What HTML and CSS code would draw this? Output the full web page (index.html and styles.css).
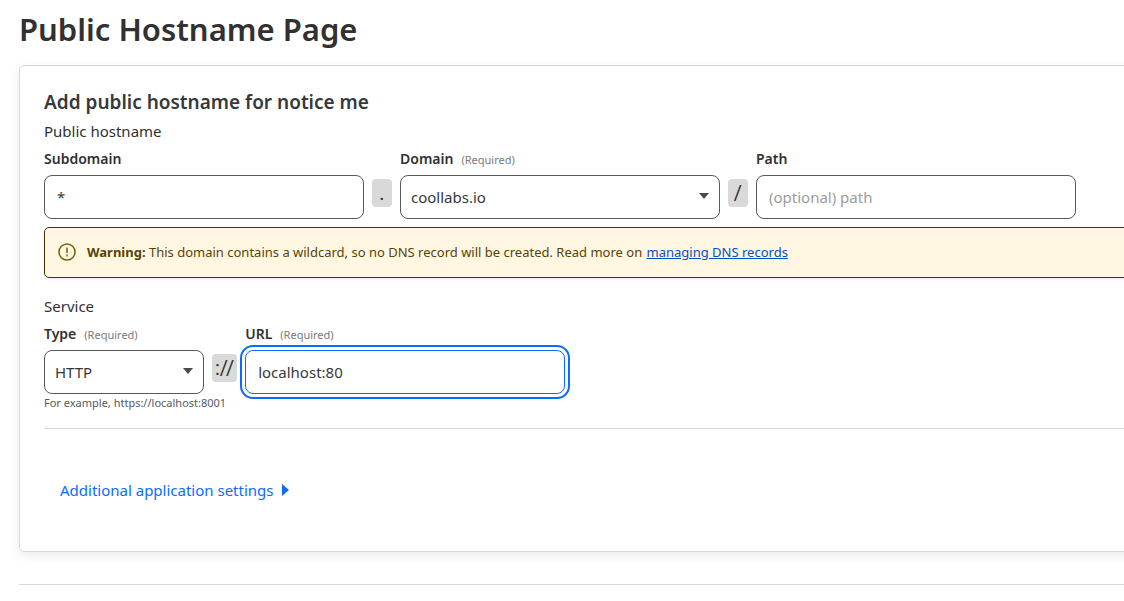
FILE: index.html
```html
<!DOCTYPE html>
<html lang="en">
<head>
<meta charset="utf-8">
<meta name="viewport" content="width=device-width, initial-scale=1">
<title>Public Hostname Page</title>
<link rel="stylesheet" href="styles.css">
</head>
<body>
<main class="page">
  <h1 class="page-title">Public Hostname Page</h1>
  <form class="card">
    <h2 class="card-title">Add public hostname for notice me</h2>
    <p class="group-name">Public hostname</p>
    <div class="row">
      <div class="field">
        <div class="field-head"><label for="subdomain">Subdomain</label></div>
        <input class="control" id="subdomain" type="text" value="*">
      </div>
      <span class="separator">.</span>
      <div class="field">
        <div class="field-head"><label for="domain">Domain</label><span class="required">(Required)</span></div>
        <div class="select">
          <select class="control" id="domain"><option>coollabs.io</option></select>
          <svg class="select-arrow" width="10" height="6" viewBox="0 0 10 6" aria-hidden="true"><path d="M0 0h10L5 6z"/></svg>
        </div>
      </div>
      <span class="separator">/</span>
      <div class="field">
        <div class="field-head"><label for="path">Path</label></div>
        <input class="control" id="path" type="text" placeholder="(optional) path">
      </div>
    </div>
    <div class="alert" role="alert">
      <svg class="alert-icon" width="18" height="18" viewBox="0 0 18 18" aria-hidden="true"><circle cx="9" cy="9" r="8"/><path d="M9 4.5v5.5M9 11.6v1.8"/></svg>
      <p class="alert-text"><strong>Warning:</strong> This domain contains a wildcard, so no DNS record will be created. Read more on <a class="alert-link" href="#">managing DNS records</a></p>
    </div>
    <p class="group-name">Service</p>
    <div class="row">
      <div class="field field-small">
        <div class="field-head"><label for="type">Type</label><span class="required">(Required)</span></div>
        <div class="select">
          <select class="control" id="type"><option>HTTP</option></select>
          <svg class="select-arrow" width="10" height="6" viewBox="0 0 10 6" aria-hidden="true"><path d="M0 0h10L5 6z"/></svg>
        </div>
      </div>
      <span class="separator">://</span>
      <div class="field">
        <div class="field-head"><label for="url">URL</label><span class="required">(Required)</span></div>
        <input class="control control-active" id="url" type="text" value="localhost:80">
      </div>
    </div>
    <p class="hint">For example, https://localhost:8001</p>
    <hr class="rule">
    <button class="disclosure" type="button">Additional application settings
      <svg width="7" height="12" viewBox="0 0 7 12" aria-hidden="true"><path d="M0 0l7 6-7 6z"/></svg>
    </button>
  </form>
  <hr class="rule">
</main>
</body>
</html>
```
FILE: styles.css
```css
* { box-sizing: border-box; }

body {
  margin: 0;
  overflow-x: hidden;
  background: #fff;
  color: #313131;
  font: 15px/24px "Noto Sans", "Open Sans", sans-serif;
}

h1, h2, p { margin: 0; }

.page {
  margin-right: -48px;
  padding: 9px 0 16px 19px;
}

.page-title {
  font-size: 31px;
  font-weight: 600;
  line-height: 40px;
}

.card {
  margin: 16px 0 32px;
  padding: 24px 24px 49px;
  border: 1px solid #d9d9d9;
  border-radius: 5px;
  box-shadow: 0 4px 12px rgba(0, 0, 0, 0.08);
}

.card-title {
  color: #36393a;
  font-size: 19px;
  font-weight: 600;
  line-height: 25px;
}

.group-name { margin: 4px 0; }

.row {
  display: flex;
  gap: 8px;
}

.field {
  display: flex;
  flex: 0 1 320px;
  flex-direction: column;
  gap: 4px;
}

.field-small { flex-basis: 160px; }

.field-head {
  display: flex;
  align-items: baseline;
  gap: 8px;
  font-size: 14px;
  font-weight: 600;
}

.required {
  color: #797979;
  font-size: 11px;
  font-weight: 400;
  line-height: 16px;
}

.control {
  display: block;
  width: 100%;
  height: 44px;
  padding: 0 12px;
  border: 1px solid #595959;
  border-radius: 8px;
  background: #fff;
  color: #36393a;
  font: inherit;
}

.control::placeholder { color: #9d9d9d; opacity: 1; }

.control:focus,
.control-active {
  border-color: #0a6cff;
  outline: 2px solid #0a6cff;
  outline-offset: 3px;
}

.select { position: relative; }

.select .control {
  padding: 0 32px 0 10px;
  appearance: none;
}

.select-arrow {
  position: absolute;
  top: 18px;
  right: 11px;
  fill: #4a4a4a;
  pointer-events: none;
}

.separator {
  min-width: 20px;
  height: 28px;
  margin-top: 32px;
  padding: 0 3px;
  border-radius: 4px;
  background: #d9d9d9;
  font-family: Roboto, sans-serif;
  font-size: 20px;
  line-height: 28px;
  text-align: center;
}

.alert {
  display: flex;
  align-items: center;
  gap: 11px;
  margin: 8px 0 16px;
  padding: 12px 13px 13px;
  border: 1px solid #453500;
  border-radius: 5px;
  background: #fff7e2;
  box-shadow: 0 1px 3px rgba(0, 0, 0, 0.1);
  color: #594300;
}

.alert-icon {
  fill: none;
  stroke: #7c6000;
  stroke-width: 1.5;
}

.alert-text { font-size: 13px; }

.alert-text strong { font-weight: 700; }

.alert-link {
  margin-left: 1px;
  color: #0051c3;
}

.hint {
  margin-top: 1px;
  color: #595959;
  font-size: 11px;
  line-height: 16px;
}

.rule {
  height: 1px;
  margin: 0;
  border: 0;
  background: #d9d9d9;
}

.hint + .rule { margin: 17px 0 49px; }

.disclosure {
  display: flex;
  align-items: center;
  gap: 8px;
  padding: 0 16px;
  border: 0;
  background: none;
  color: #0a6cff;
  font: inherit;
  cursor: pointer;
}

.disclosure svg { fill: #0a6cff; }
```
